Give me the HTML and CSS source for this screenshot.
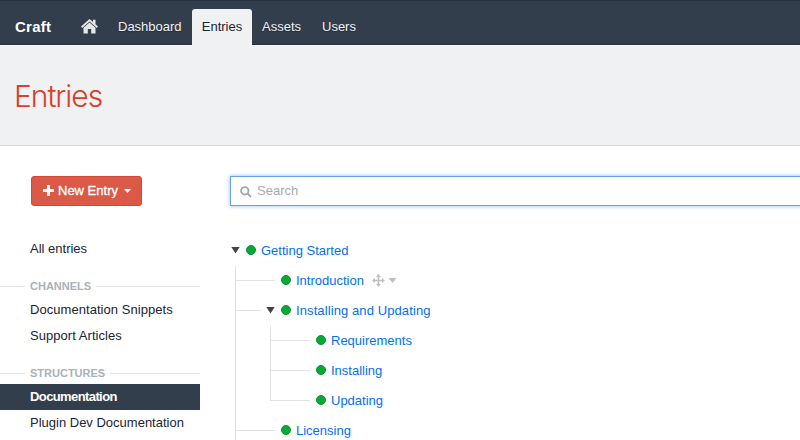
FILE: index.html
```html
<!DOCTYPE html>
<html lang="en">
<head>
<meta charset="utf-8">
<title>Entries - Craft</title>
<link rel="stylesheet" href="styles.css">
</head>
<body>
<header class="topbar">
  <a class="brand">Craft</a>
  <nav class="nav">
    <a class="home"><svg width="17" height="15" viewBox="0 0 17 15"><path d="M8.500 0 12 3V.8h2.500v4.400L17 7.500l-1.200 1.400-7.300-6.300-7.300 6.300L0 7.500z"/><path d="M8.500 3.600 14.500 8.800V14.500h-4.300V10H6.800v4.500H2.500V8.800z"/></svg></a>
    <a class="n-dash">Dashboard</a>
    <a class="tab">Entries</a>
    <a class="n-assets">Assets</a>
    <a class="n-users">Users</a>
  </nav>
</header>
<div class="heading"><h1>Entries</h1></div>
<div class="content">
  <aside class="sidebar">
    <button class="new-entry"><svg width="11" height="11" viewBox="0 0 11 11"><path d="M4 0h3v4h4v3H7v4H4V7H0V4h4z"/></svg><span>New Entry</span><svg width="7" height="4" viewBox="0 0 7 4"><path d="M0 0h7L3.500 4z"/></svg></button>
    <a class="item all">All entries</a>
    <h2 class="group channels"><span>CHANNELS</span></h2>
    <a class="item snippets">Documentation Snippets</a>
    <a class="item support">Support Articles</a>
    <h2 class="group structures"><span>STRUCTURES</span></h2>
    <a class="item selected">Documentation</a>
    <a class="item plugin">Plugin Dev Documentation</a>
  </aside>
  <main class="main">
    <div class="search"><svg width="12" height="12" viewBox="0 0 12 12"><circle cx="4.800" cy="4.800" r="3.700"/><path d="M7.500 7.500 11 11"/></svg><span>Search</span></div>
    <ul class="tree">
      <li>
        <div class="row"><i class="toggle"></i><i class="dot"></i><a class="t-start">Getting Started</a></div>
        <ul>
          <li><div class="row"><i class="line"></i><i class="dot"></i><a class="t-intro">Introduction</a><svg class="move" width="13" height="13" viewBox="0 0 13 13"><path d="M6.500 0 9 3H7.300v2.700H10V4l3 2.500L10 9V7.300H7.300V10H9l-2.500 3L4 10h1.700V7.300H3V9L0 6.500 3 4v1.700h2.700V3H4z"/></svg><svg class="caret" width="9" height="5" viewBox="0 0 9 5"><path d="M.5 0h8l-4 5z"/></svg></div></li>
          <li><div class="row"><i class="line short"></i><i class="toggle"></i><i class="dot"></i><a class="t-iu">Installing and Updating</a></div>
            <ul>
              <li><div class="row"><i class="line"></i><i class="dot"></i><a class="t-req">Requirements</a></div></li>
              <li><div class="row"><i class="line"></i><i class="dot"></i><a class="t-inst">Installing</a></div></li>
              <li class="last"><div class="row"><i class="line"></i><i class="dot"></i><a class="t-upd">Updating</a></div></li>
            </ul>
          </li>
          <li><div class="row"><i class="line"></i><i class="dot"></i><a class="t-lic">Licensing</a></div></li>
        </ul>
      </li>
    </ul>
  </main>
</div>
</body>
</html>
```

FILE: styles.css
```css
* { box-sizing: border-box; }
html, body { height: 440px; overflow: hidden; }
body { margin: 0; background: #fff; color: #1b2433; font: 13px/20px "Liberation Sans", Arial, sans-serif; }
h1, h2, ul { margin: 0; padding: 0; list-style: none; font-weight: normal; }
svg { display: block; fill: currentColor; flex: none; }
a { white-space: nowrap; }

.topbar { display: flex; height: 45px; padding-left: 15px; background: #333e4c; border-top: 1px solid #27323f; border-bottom: 1px solid #27313e; color: #f0f2f5; }
.brand { width: 66px; font-size: 15px; font-weight: bold; line-height: 51px; letter-spacing: .25px; color: #fff; }
.nav { display: flex; line-height: 51px; text-shadow: 0 1px 1px #202a36; }
.home { width: 37px; padding-top: 18px; color: #e4e6e8; }
.n-dash { width: 74px; }
.tab { width: 60px; height: 37px; margin-top: 8px; line-height: 35px; text-align: center; border-radius: 3px 3px 0 0; background: #f0f1f3; color: #1b2433; text-shadow: none; }
.n-assets { margin-left: 10px; width: 60px; }

.heading { height: 101px; padding: 30px 15px 0; background: #f0f1f3; border-top: 1px solid #f8f8fa; border-bottom: 1px solid #d9dadd; }
h1 { font: 300 30px/40px Inter, "Liberation Sans", sans-serif; letter-spacing: -1.05px; margin-left: -1px; color: #da3f28; }

.content { display: flex; height: 294px; }
.sidebar { width: 200px; padding-top: 30px; flex: none; }
.new-entry { display: flex; align-items: center; width: 111px; height: 30px; margin: 0 0 30px 31px; padding: 0 0 1px 11px; border: 1px solid #d04936; border-radius: 3px; background: #da5a47; color: #fff; font: 13px/20px "Liberation Sans", sans-serif; -webkit-text-stroke: .3px #fff; }
.new-entry span { width: 66px; margin-left: 4px; white-space: nowrap; text-align: left; }
.item { display: block; height: 26px; padding-left: 30px; line-height: 26px; }
.group { display: flex; align-items: center; height: 20px; font-size: 11px; font-weight: bold; line-height: 20px; color: #a9b1b9; }
.group::before { content: ""; width: 25px; height: 1px; margin-right: 5px; background: #e2e5e7; }
.group::after { content: ""; flex: 1; height: 1px; margin-left: 5px; background: #e2e5e7; }
.channels { margin: 14px 0 1px; }
.structures { margin: 14px 0 1px; }
.snippets, .support { letter-spacing: .05px; }
.selected { background: #333e4c; color: #fff; font-weight: bold; letter-spacing: -.6px; }

.main { width: 600px; padding: 30px 0 0 30px; }
.search { display: flex; align-items: center; width: 600px; height: 30px; padding-left: 9px; border: 1px solid #68a1e8; box-shadow: 0 0 4px #8bbcf5; color: #a5abb2; }
.search svg { fill: none; stroke: #a0a5aa; stroke-width: 1.800; margin-top: 2px; }
.search span { margin-left: 5px; }
.tree { margin-top: 29px; }
.row { display: flex; align-items: center; height: 30px; color: #0070f3; }
.row a { padding-top: 2px; }
.t-iu { letter-spacing: .1px; }
.toggle { width: 9px; height: 7px; margin: 0 6px 0 1px; background: #444; clip-path: polygon(0 0, 100% 0, 50% 100%); }
.dot { width: 10px; height: 10px; margin-right: 5px; border-radius: 50%; background: #05aa36; border: 1px solid #128d35; }
.tree ul { margin-left: 5px; }
.tree ul ul { margin-left: 35px; }
.tree ul li { position: relative; }
.tree ul li::before { content: ""; position: absolute; left: 0; top: 0; bottom: 0; width: 1px; background: #e2e2e2; }
.tree ul li:first-child::before { top: 1px; }
.tree ul .last::before { bottom: 14px; }
.line { width: 40px; height: 1px; margin: 1px 6px 0 0; background: #e2e2e2; }
.line.short { width: 26px; margin-right: 4px; }
.move { margin-left: 8px; color: #bfbfbf; }
.caret { margin-left: 3px; color: #bfbfbf; }
```
